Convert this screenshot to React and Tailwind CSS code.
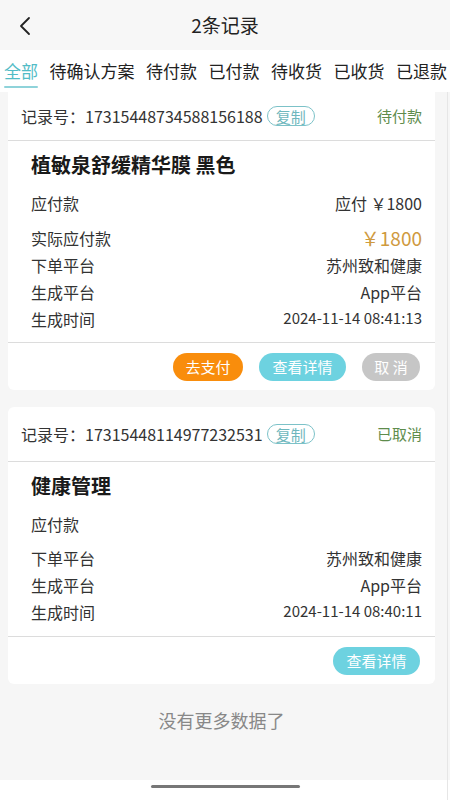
import React from "react";

const font = { fontFamily: '"Noto Sans CJK SC", "Noto Sans", sans-serif' };

function Row({ label, value, className = "h-[27px]", valueClass = "text-[16px] text-[#333]" }) {
  return (
    <div className={`flex items-center justify-between ${className}`}>
      <span className="text-[16px] text-[#333]">{label}</span>
      <span className={valueClass}>{value}</span>
    </div>
  );
}

function CardHeader({ no, status, h }) {
  return (
    <div className={`flex items-center justify-between pl-[13px] pr-[13px] ${h} border-b border-[#dcdcdc]`}>
      <div className="flex items-center">
        <span className="text-[16px] text-[#333]">记录号：{no}</span>
        <span className="ml-[4px] flex h-[20px] items-center rounded-full border border-[#7cc2c8] px-[8px] text-[15px] leading-none text-[#6fb7bd]">复制</span>
      </div>
      <span className="text-[15px] text-[#5e8c4c]">{status}</span>
    </div>
  );
}

export default function App() {
  return (
    <div className="relative h-[800px] w-[450px] overflow-hidden bg-[#f6f6f6]" style={font}>
      {/* header */}
      <div className="relative flex h-[50px] items-center justify-center bg-[#f7f7f7]">
        <svg className="absolute left-[17px] top-[16px]" width="16" height="20" viewBox="0 0 16 20" fill="none">
          <path d="M12 2 L4 10 L12 18" stroke="#222" strokeWidth="1.8" strokeLinecap="round" strokeLinejoin="round" />
        </svg>
        <span className="text-[19px] text-[#222]">2条记录</span>
      </div>
      {/* tabs */}
      <div className="flex h-[42px] items-start gap-[11.5px] overflow-hidden whitespace-nowrap bg-white pl-[4px] pt-[9px]">
        <div className="flex flex-col items-center">
          <span className="text-[17px] leading-[24px] text-[#52bcc6]">全部</span>
          <div className="mt-[3px] h-[2px] w-[34px] rounded-full bg-[#8fd3da]" />
        </div>
        {["待确认方案", "待付款", "已付款", "待收货", "已收货", "已退款"].map((t) => (
          <span key={t} className="text-[17px] leading-[24px] text-[#222]">{t}</span>
        ))}
      </div>

      <div className="px-[8px] pr-[15px]">
        {/* card 1 */}
        <div className="rounded-b-[6px] bg-white">
          <CardHeader no="17315448734588156188" status="待付款" h="h-[49px]" />
          <div className="px-[23px] pr-[13px] pb-[10px]">
            <div className="flex h-[48px] items-center text-[20px] font-bold text-[#1a1a1a]">植敏泉舒缓精华膜 黑色</div>
            <Row label="应付款" value="应付 ￥1800" className="h-[28px]" />
            <Row label="实际应付款" value="￥1800" className="h-[34px] pt-[8px]" valueClass="text-[19px] text-[#cf9a3e]" />
            <Row label="下单平台" value="苏州致和健康" />
            <Row label="生成平台" value="App平台" />
            <Row label="生成时间" value="2024-11-14 08:41:13" valueClass="text-[15px] text-[#333]" />
          </div>
          <div className="flex h-[48px] items-start justify-end gap-[16px] border-t border-[#dcdcdc] pr-[15px] pt-[10px]">
            <span className="flex h-[28px] w-[70px] items-center justify-center rounded-full bg-[#f98d0c] text-[15px] text-white">去支付</span>
            <span className="flex h-[28px] w-[87px] items-center justify-center rounded-full bg-[#6dd2e0] text-[15px] text-white">查看详情</span>
            <span className="flex h-[28px] w-[58px] items-center justify-center rounded-full bg-[#c6c6c6] text-[15px] text-white">取 消</span>
          </div>
        </div>

        {/* card 2 */}
        <div className="mt-[17px] rounded-[6px] bg-white">
          <CardHeader no="17315448114977232531" status="已取消" h="h-[55px]" />
          <div className="px-[23px] pr-[13px] pb-[11px]">
            <div className="flex h-[48px] items-center text-[20px] font-bold text-[#1a1a1a]">健康管理</div>
            <Row label="应付款" value="" className="h-[28px]" />
            <div className="h-[6px]" />
            <Row label="下单平台" value="苏州致和健康" />
            <Row label="生成平台" value="App平台" />
            <Row label="生成时间" value="2024-11-14 08:40:11" valueClass="text-[15px] text-[#333]" />
          </div>
          <div className="flex h-[48px] items-start justify-end border-t border-[#dcdcdc] pr-[15px] pt-[10px]">
            <span className="flex h-[28px] w-[87px] items-center justify-center rounded-full bg-[#6dd2e0] text-[15px] text-white">查看详情</span>
          </div>
        </div>

        <div className="mt-[23px] flex h-[26px] items-center justify-center text-[18px] text-[#888]">没有更多数据了</div>
      </div>

      {/* bottom bar */}
      <div className="absolute bottom-0 left-0 flex h-[20px] w-[450px] justify-center bg-white pt-[5px]">
        <div className="h-[3px] w-[149px] rounded-full bg-[#777]" />
      </div>
      <div className="absolute right-[2px] top-[92px] h-[708px] w-[1px] bg-[#e6e6e6]" />
    </div>
  );
}
